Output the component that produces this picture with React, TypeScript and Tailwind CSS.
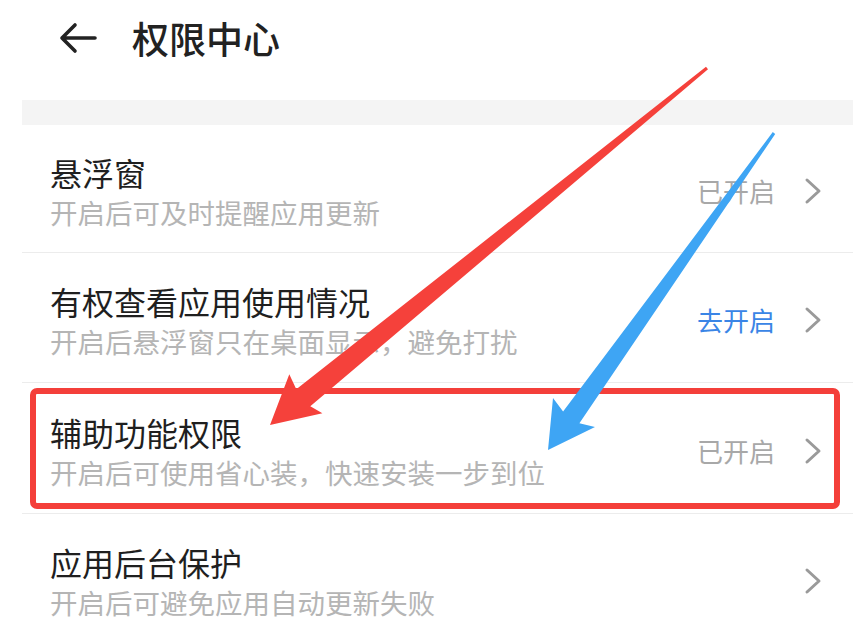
const rows = [
  { title: "悬浮窗", sub: "开启后可及时提醒应用更新", status: "已开启", active: false, h: "h-[128px]" },
  { title: "有权查看应用使用情况", sub: "开启后悬浮窗只在桌面显示，避免打扰", status: "去开启", active: true, h: "h-[130px]" },
  { title: "辅助功能权限", sub: "开启后可使用省心装，快速安装一步到位", status: "已开启", active: false, h: "h-[131px]", boxed: true },
  { title: "应用后台保护", sub: "开启后可避免应用自动更新失败", status: "", active: false, h: "h-[130px]" },
];

function Chevron() {
  return (
    <svg width="18" height="28" viewBox="0 0 18 28" className="shrink-0">
      <polyline points="3,3 15,14 3,25" fill="none" stroke="#9a9a9a" strokeWidth="3" strokeLinecap="round" strokeLinejoin="round" />
    </svg>
  );
}

export default function App() {
  return (
    <div
      className="relative h-[622px] w-[853px] overflow-hidden bg-white"
      style={{ fontFamily: '"Noto Sans CJK SC", "Noto Sans", sans-serif' }}
    >
      {/* header */}
      <div className="flex h-[76px] items-center pl-[58px]">
        <svg width="40" height="32" viewBox="0 0 40 32" className="shrink-0">
          <path d="M4 16H37M17 3L4 16L17 29" fill="none" stroke="#222" strokeWidth="3.6" strokeLinecap="round" strokeLinejoin="round" />
        </svg>
        <h1 className="ml-[34px] text-[37px] font-medium leading-none text-[#222]">权限中心</h1>
      </div>
      <div className="mt-[24px] ml-[22px] h-[25px] bg-[#f4f4f4]" />

      {/* list */}
      <div className="ml-[22px]">
        {rows.map((r) => (
          <div key={r.title} className={`relative flex ${r.h} items-center justify-between border-b border-[#ececec] pt-[5px] pl-[28px] pr-[31px]`}>
            <div className="flex flex-col">
              <div className="text-[32px] leading-[34px] text-[#1f1f1f]">{r.title}</div>
              <div className="mt-[8px] text-[27.5px] leading-[30px] text-[#b5b5b5]">{r.sub}</div>
            </div>
            <div className="flex items-center">
              {r.status && (
                <span className={`mr-[29px] text-[26px] leading-none ${r.active ? "text-[#3a85e6]" : "text-[#a8a8a8]"}`}>{r.status}</span>
              )}
              <Chevron />
            </div>
            {r.boxed && (
              <div className="absolute top-[5px] right-[13px] bottom-[4px] left-[8px] rounded-[7px] border-[6px] border-[#f43f3a]" />
            )}
          </div>
        ))}
      </div>

      {/* annotation arrows */}
      <svg className="pointer-events-none absolute inset-0" width="853" height="622" viewBox="0 0 853 622">
        <polygon
          points="706,66.8 296.3,389.3 289.3,374.3 270,425 322.4,413.2 310.3,406.3 708,69.2"
          fill="#f5413b"
        />
        <polygon
          points="772.8,132.1 563.1,411.6 553,398 548,450 595,427 579.4,423.2 775.2,133.9"
          fill="#3ea5f4"
        />
      </svg>
    </div>
  );
}
